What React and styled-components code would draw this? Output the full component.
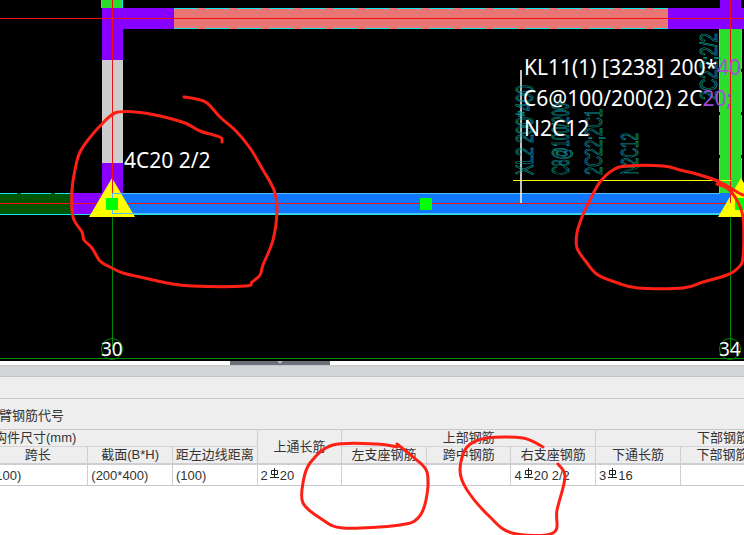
import React from "react";
import styled, { createGlobalStyle } from "styled-components";

const Global = createGlobalStyle`
  html, body { margin: 0; padding: 0; background: #fff; overflow: hidden; }
  #root { width: 744px; height: 535px; overflow: hidden; }
`;

const Page = styled.div`
  position: relative;
  width: 744px;
  height: 535px;
  overflow: hidden;
  background: #fff;
  font-family: "Liberation Sans", "Noto Sans CJK SC", sans-serif;
  color: #333;
`;
const Canvas = styled.svg`
  display: block;
  width: 744px;
  height: 361px;
  background: #000;
`;
const CadLabel = styled.text`
  font-family: "Noto Sans", "Open Sans", sans-serif;
  font-size: ${(p) => p.$size || 21}px;
  fill: #fff;
`;
const CadNote = styled.text`
  font-family: "Liberation Sans", sans-serif;
  font-size: 24px;
  fill: none;
  stroke: #0b9c9c;
  stroke-width: 0.8;
`;
const Splitter = styled.div`
  height: 4px;
  display: flex;
  justify-content: center;
  padding-right: 4px;
`;
const SplitHandle = styled.div`
  width: 100px;
  height: 4px;
  margin-right: 180px;
  background: #6c7179;
  display: flex;
  justify-content: center;
  &::after {
    content: "";
    width: 0;
    height: 0;
    border-left: 3px solid transparent;
    border-right: 3px solid transparent;
    border-top: 3px solid #b4b6ba;
  }
`;
const ToolStrip = styled.div`
  height: 10px;
  background: #d4d5d9;
  border-top: 1px solid #c8c8cc;
  border-bottom: 1px solid #c4c4c8;
`;
const ActionBar = styled.div`
  height: 21px;
  background: #eeeeee;
  border-bottom: 1px solid #c8c8cc;
`;
const CodeBar = styled.div`
  height: 30px;
  background: #eeeeee;
  box-sizing: content-box;
  margin-left: -14px;
  padding-left: 0;
  display: flex;
  align-items: center;
  font-size: 13px;
`;
const Grid = styled.table`
  border-collapse: separate;
  border-spacing: 0;
  table-layout: fixed;
  width: 862px;
  margin-left: -12px;
  font-size: 13px;
`;
const HeadCell = styled.th`
  height: ${(p) => p.$h || 16}px;
  padding: 0;
  font-weight: 400;
  background: #eeeeee;
  color: #333;
  text-align: ${(p) => p.$align || "center"};
  padding-left: ${(p) => p.$pad || 0}px;
  border-top: ${(p) => (p.$top ? "1px solid #c8c8cc" : "none")};
  border-bottom: ${(p) => (p.$under ? "1px solid #d4d4d8" : "none")};
  border-right: ${(p) => (p.$right ? "1px solid #cfcfd3" : "none")};
  line-height: 14px;
  white-space: nowrap;
  overflow: hidden;
`;
const DataCell = styled.td`
  height: 20px;
  padding: 0 0 0 3px;
  background: #fff;
  border-top: 2px solid #cfcfd3;
  border-bottom: 1px solid #c8c8cc;
  border-right: 1px solid #cfcfd3;
  font-size: 13px;
  white-space: nowrap;
  color: #333;
`;
const RebarGlyph = styled.svg`
  width: 9px;
  height: 11px;
  margin: 0 1px 0 2px;
  vertical-align: 1px;
`;

const Rebar = () => (
  <RebarGlyph viewBox="0 0 9 11" fill="none" stroke="#222" strokeWidth="1">
    <path d="M4.5 0v10M1.5 2.5h6v4h-6zM0 9.5h9" />
  </RebarGlyph>
);

const toPath = (pts) => {
  let d = `M${pts[0][0]} ${pts[0][1]}`;
  for (let i = 0; i < pts.length - 1; i++) {
    const a = pts[i - 1] || pts[i];
    const b = pts[i];
    const c = pts[i + 1];
    const e = pts[i + 2] || c;
    d += `C${b[0] + (c[0] - a[0]) / 6} ${b[1] + (c[1] - a[1]) / 6} ${c[0] - (e[0] - b[0]) / 6} ${c[1] - (e[1] - b[1]) / 6} ${c[0]} ${c[1]}`;
  }
  return d;
};

const strokes = [
  [[184,97],[196,99],[207,103],[220,117],[236,131],[250,148],[263,170],[274,190],[277,210],[273,240],[263,265],[260,275],[252,282],[245,286],[192,286],[167,283],[140,277],[123,273],[110,267],[100,261],[92,248],[84,240],[82,232],[73,217],[72,190],[76,165],[80,152],[88,140],[100,126],[115,113],[135,112],[160,116],[185,123],[200,131],[220,137],[222,142]],
  [[743,195],[737,192],[720,182],[700,175],[680,170],[663,166],[627,166],[613,170],[600,182],[590,200],[582,217],[577,233],[577,248],[587,263],[598,275],[618,283],[638,288],[683,288],[703,282],[727,275],[738,268],[743,257],[743,217],[735,197],[727,188],[717,184]],
  [[397,447],[377,444],[333,445],[310,463],[303,483],[303,503],[320,518],[343,528],[400,525],[418,518],[426,500],[427,472],[413,457],[397,444]],
  [[543,447],[523,438],[487,438],[467,447],[460,470],[467,490],[490,517],[512,533],[553,533],[557,510],[565,477],[558,464]],
];

const Scribbles = styled.svg`
  position: absolute;
  left: 0;
  top: 0;
  width: 744px;
  height: 535px;
  pointer-events: none;
`;

const Drawing = () => (
  <Canvas viewBox="0 0 744 361">
    {/* columns */}
    <rect x="102" y="0" width="21" height="8" fill="#2ddd2d" />
    <path d="M101.5 0v8M122.5 0v8" stroke="#19e6e6" />
    <rect x="102" y="8" width="21" height="52" fill="#8800ff" />
    <rect x="102" y="60" width="21" height="103" fill="#cdcdcd" />
    <rect x="102" y="163" width="21" height="30" fill="#8800ff" />
    <rect x="123" y="8" width="51" height="21" fill="#8800ff" />
    {/* top beam */}
    <rect x="174" y="8" width="494" height="21" fill="#e97575" />
    <path d="M174 8.5h494M174 28.5h494" stroke="#19e6e6" strokeDasharray="24 8" />
    <rect x="668" y="8" width="76" height="21" fill="#8800ff" />
    <rect x="720" y="0" width="21" height="8" fill="#8800ff" />
    <rect x="720" y="29" width="21" height="166" fill="#2ddd2d" />
    <path d="M719.5 29v166M741.5 29v166" stroke="#19e6e6" strokeDasharray="40 3" />
    {/* lower beam */}
    <rect x="0" y="193" width="72" height="21" fill="#005500" />
    <path d="M0 193.5h72" stroke="#19e6e6" strokeDasharray="17 4 30 4" />
    <rect x="72" y="193" width="40" height="21" fill="#8800ff" />
    <path d="M0 214.5h744" stroke="#19e6e6" />
    <rect x="112" y="193" width="608" height="21" fill="#1177ff" />
    <path d="M112 193.5h608" stroke="#55bbff" />
    <path d="M112 213.5h608M112 193v21" stroke="#55bbff" />
    <rect x="720" y="193" width="24" height="21" fill="#1177ff" />
    {/* axes */}
    <path d="M0 18.5h744M0 203.5h744" stroke="#ee1111" />
    <path d="M112.5 0v203M730.5 0v203" stroke="#ee1111" />
    <path d="M112.5 214V350M730.5 214V350" stroke="#008800" />
    <path d="M0 358.5h744" stroke="#008800" />
    {/* supports */}
    <polygon points="112,178 89,217 135,217" fill="#ffff00" />
    <polygon points="741,178 718,217 764,217" fill="#ffff00" />
    <path d="M112.5 178v25" stroke="#ee1111" />
    <path d="M730.5 195v8" stroke="#ee1111" />
    <path d="M112 193.5h23M112 213.5h23M112.5 194v20" stroke="#55bbff" />
    <rect x="106" y="198" width="12" height="12" fill="#00ff00" />
    <rect x="420" y="198" width="12" height="12" fill="#00ff00" />
    <rect x="735" y="198" width="12" height="12" fill="#00ff00" />
    {/* leader */}
    <path d="M513 180.5h218" stroke="#ffff00" />
    <path d="M521 70v133" stroke="#fff" strokeWidth="1.5" />
    {/* teal notes */}
    <CadNote transform="translate(533 175) rotate(-90)" textLength="90" lengthAdjust="spacingAndGlyphs">XL2 200*400</CadNote>
    <CadNote transform="translate(569 175) rotate(-90)" textLength="72" lengthAdjust="spacingAndGlyphs">C8@100/200</CadNote>
    <CadNote transform="translate(602 175) rotate(-90)" textLength="66" lengthAdjust="spacingAndGlyphs">2C22;2C1</CadNote>
    <CadNote transform="translate(638 175) rotate(-90)" textLength="42" lengthAdjust="spacingAndGlyphs">N2C12</CadNote>
    <CadNote transform="translate(717 100) rotate(-90)" textLength="67" lengthAdjust="spacingAndGlyphs">2C22;2/2</CadNote>
    {/* labels */}
    <CadLabel x="524" y="75">KL11(1) [3238] 200*<tspan fill="#a24fd6">40</tspan></CadLabel>
    <CadLabel x="523" y="106">C6@100/200(2) 2C<tspan fill="#a24fd6">20;</tspan></CadLabel>
    <CadLabel x="524" y="136">N2C12</CadLabel>
    <CadLabel x="124" y="168">4C20 2/2</CadLabel>
    {/* axis bubbles */}
    <circle cx="112" cy="349" r="10.5" fill="none" stroke="#008800" />
    <circle cx="730" cy="349" r="10.5" fill="none" stroke="#008800" />
    <CadLabel x="101" y="356" $size={19}>30</CadLabel>
    <CadLabel x="719" y="356" $size={19}>34</CadLabel>
  </Canvas>
);

export default function App() {
  return (
    <Page>
      <Global />
      <Drawing />
      <Splitter>
        <SplitHandle />
      </Splitter>
      <ToolStrip />
      <ActionBar />
      <CodeBar>悬臂钢筋代号</CodeBar>
      <Grid>
        <colgroup>
          <col style={{ width: 96 }} />
          {Array.from({ length: 9 }, (_, i) => (
            <col key={i} style={{ width: 81 }} />
          ))}
        </colgroup>
        <thead>
          <tr>
            <HeadCell colSpan={3} $top $under $right $align="left" $pad={6}>构件尺寸(mm)</HeadCell>
            <HeadCell rowSpan={2} $top $right>上通长筋</HeadCell>
            <HeadCell colSpan={3} $top $under $right>上部钢筋</HeadCell>
            <HeadCell colSpan={3} $top $under>下部钢筋</HeadCell>
          </tr>
          <tr>
            <HeadCell $right>跨长</HeadCell>
            <HeadCell $right>截面(B*H)</HeadCell>
            <HeadCell $right>距左边线距离</HeadCell>
            <HeadCell $right>左支座钢筋</HeadCell>
            <HeadCell $right>跨中钢筋</HeadCell>
            <HeadCell $right>右支座钢筋</HeadCell>
            <HeadCell $right>下通长筋</HeadCell>
            <HeadCell $right>下部钢筋</HeadCell>
            <HeadCell />
          </tr>
        </thead>
        <tbody>
          <tr>
            <DataCell>(100)</DataCell>
            <DataCell>(200*400)</DataCell>
            <DataCell>(100)</DataCell>
            <DataCell>2<Rebar />20</DataCell>
            <DataCell />
            <DataCell />
            <DataCell>4<Rebar />20 2/2</DataCell>
            <DataCell>3<Rebar />16</DataCell>
            <DataCell />
            <DataCell />
          </tr>
        </tbody>
      </Grid>
      <Scribbles viewBox="0 0 744 535">
        {strokes.map((s, i) => (
          <path key={i} d={toPath(s)} fill="none" stroke="#ff2015" strokeWidth="3" strokeLinecap="round" strokeLinejoin="round" />
        ))}
      </Scribbles>
    </Page>
  );
}
